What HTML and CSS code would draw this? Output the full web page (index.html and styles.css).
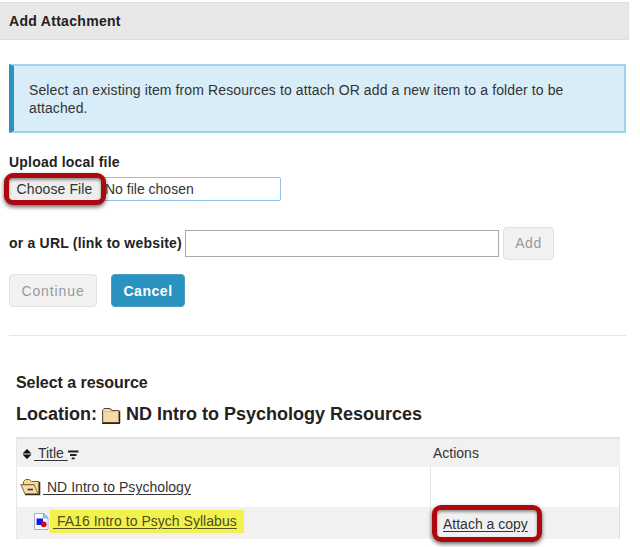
FILE: index.html
```html
<!DOCTYPE html>
<html lang="en">
<head>
<meta charset="utf-8">
<title>Add Attachment</title>
<link rel="stylesheet" href="styles.css">
</head>
<body>
<header class="page-header"><h1><span>Add Attachment</span></h1></header>
<main>
  <p class="notice"><span>Select an existing item from Resources to attach OR add a new item to a folder to be</span><br><span>attached.</span></p>
  <section class="upload">
    <h2><span>Upload local file</span></h2>
    <div class="file-field">
      <button class="choose callout"><span>Choose File</span></button>
      <span class="file-name">No file chosen</span>
    </div>
  </section>
  <div class="url-row">
    <label for="url">or a URL (link to website)</label>
    <input id="url" type="text">
    <button class="btn add"><span>Add</span></button>
  </div>
  <div class="actions">
    <button class="btn continue"><span>Continue</span></button>
    <button class="btn cancel"><span>Cancel</span></button>
  </div>
  <section class="resources">
    <h2 class="select-title"><span>Select a resource</span></h2>
    <h3 class="location">
      <span class="loc-label">Location:</span>
      <svg class="folder" width="20" height="18" viewBox="0 0 20 18"><path d="M1.5 15.5V3.5L3 1.5h6l2 2h7v12z" fill="#f3dba8" stroke="#6b4a32"/><path d="M2.5 4.5h15M2.5 4v11" stroke="#e0d040"/><path d="M3 1.5h6l2 2" fill="none" stroke="#59402c"/><path d="M1 16.3h18M18.6 4v12" stroke="#382018" stroke-width="1.3"/></svg>
      <span class="loc-name">ND Intro to Psychology Resources</span>
    </h3>
    <div class="table">
      <div class="row head">
        <div class="cell title">
          <svg class="sort" width="10" height="12" viewBox="0 0 10 12"><path d="M5 1l4.5 4.4h-9zM5 11l4.5-4.4h-9z" fill="#111"/></svg>
          <a class="title-link">&nbsp;Title&nbsp;</a>
          <svg class="filter" width="11" height="10" viewBox="0 0 11 10"><path d="M0 1.5h10.5M2 5h6.5M3.7 8.3h3" stroke="#222" stroke-width="1.8"/></svg>
        </div>
        <div class="cell"><span class="actions-label">Actions</span></div>
      </div>
      <div class="row">
        <div class="cell title">
          <svg class="open-folder" width="22" height="18" viewBox="0 0 22 18"><path d="M3.5 8V3.5l2-2h4l2 2h7.500v12" fill="#f0df88" stroke="#806038"/><path d="M.8 6.500h13.200l4 9.500H5z" fill="#f6ddad" stroke="#8b6945"/><path d="M2 7.500h12" stroke="#e0c849"/><path d="M7.500 11.500h5.500" stroke="#493529" stroke-width="1.6"/><path d="M5 16.500h14.500V4" fill="none" stroke="#3d281d" stroke-width="1.6"/></svg>
          <a class="folder-link">&nbsp;ND Intro to Psychology</a>
        </div>
        <div class="cell"></div>
      </div>
      <div class="row item">
        <div class="cell title">
          <svg class="doc" width="15" height="17" viewBox="0 0 15 17"><path d="M.5.5h9.300l4.200 4.200v11.800H.5z" fill="#fff" stroke="#a6afba"/><path d="M9.500.5v4.500h4.500z" fill="#8fd0f5" stroke="#74b5e0"/><path d="M2.500 5.500h6.500v6.500h-6.500z" fill="#1717f0"/><circle cx="9.800" cy="11.300" r="2.900" fill="#c40b18"/></svg>
          <mark><a class="file-link">&nbsp;FA16 Intro to Psych Syllabus</a></mark>
        </div>
        <div class="cell"><span class="attach callout"><a class="attach-link">Attach a copy</a></span></div>
      </div>
    </div>
  </section>
</main>
</body>
</html>
```
FILE: styles.css
```css
* { box-sizing: border-box; }
body { margin: 0; width: 640px; height: 547px; overflow: hidden; background: #fff; color: #333; font: 14px/18px "Liberation Sans", Arial, sans-serif; }
h1, h2, h3, p { margin: 0; }
h1, h2 { font-size: 14px; line-height: 18px; color: #222; }
button, input { font: inherit; margin: 0; }
a { text-decoration: underline; text-underline-offset: 2px; white-space: pre; }
svg { display: block; flex: none; }
.page-header { margin-top: 2px; width: 629px; height: 38px; padding: 9px 9px; background: #e8e8e8; border: solid #dedede; border-width: 1px 1px 1px 0; }
.page-header h1 { line-height: 18px; letter-spacing: .3px; }
main { padding: 24px 0 0 9px; }
.notice { width: 617px; height: 69px; padding: 15px 0 0 15px; background: #d9edf8; border: 2px solid #a1d2eb; border-left: 5px solid #2a93be; line-height: 18px; }
.notice span { letter-spacing: .11px; }
.upload { padding-top: 20px; }
.upload h2 { letter-spacing: .2px; }
.file-field { display: flex; align-items: center; width: 272px; height: 24px; margin-top: 6px; border: 1px solid #8ec2ed; border-radius: 2px; }
.callout { border: 5px solid #ad080d; border-radius: 9px; box-shadow: 0 2px 4px #0009, inset 0 2px 3px #0006; }
.choose { flex: none; width: 102px; height: 32px; margin-left: -6px; padding: 0 1px 0 0; background: #eee; color: #333; white-space: nowrap; letter-spacing: .1px; }
.file-name { margin-left: -1px; }
.url-row { display: flex; align-items: center; height: 34px; margin-top: 25px; }
.url-row label { width: 176px; font-weight: bold; color: #222; white-space: nowrap; letter-spacing: .2px; }
.url-row input { width: 314px; height: 27px; border: 1px solid #aaa; padding: 0 5px; }
.btn { height: 33px; padding: 0; border: 1px solid #e2e2e2; border-radius: 4px; background: #f2f2f2; color: #999; }
.add { width: 51px; height: 33px; margin-left: 4px; letter-spacing: .5px; }
.actions { display: flex; gap: 14px; margin-top: 14px; }
.continue { width: 88px; letter-spacing: .9px; }
.cancel { width: 74px; background: #2a92be; border-color: #4b9fc7; color: #fff; font-weight: bold; letter-spacing: .55px; }
.resources { width: 617px; margin-top: 28px; border-top: 1px solid #e6e6e6; padding: 38px 0 0 7px; }
.select-title { font-size: 16px; letter-spacing: -.05px; }
.location { display: flex; align-items: center; height: 26px; margin-top: 9px; font-size: 18px; line-height: 26px; color: #222; white-space: nowrap; }
.folder { margin: 3px 5px 0 4px; }
.table { width: 604px; margin-top: 10px; }
.row { display: grid; grid-template-columns: 415px 189px; grid-template-rows: 100%; height: 40px; }
.row .cell { display: flex; align-items: center; border-right: 1px solid #e2e2e2; }
.row .title { border-left: 1px solid #e6e6e6; }
.head { height: 30px; background: #f1f1f1; border-top: 2px solid #e2e2e2; }
.head .cell { border-right: 0; }
.item { height: 32px; background: #f1f1f1; }
.sort { margin: 2px 2px 0 5px; }
.filter { margin: 3px 0 0; }
.actions-label { margin-left: 2px; }
.open-folder { margin: 0 1px 0 3px; }
.folder-link { letter-spacing: .04px; }
.doc { margin-left: 17px; margin-right: 1px; margin-top: -4px; }
mark { width: 194px; height: 23px; margin-top: -3px; padding: 2px 0 0 3px; background: #f1f24c; color: #4d4d28; letter-spacing: .03px; }
.attach { width: 110px; height: 37px; flex: none; padding: 5px 0 0 6px; margin-left: 1px; }
```
